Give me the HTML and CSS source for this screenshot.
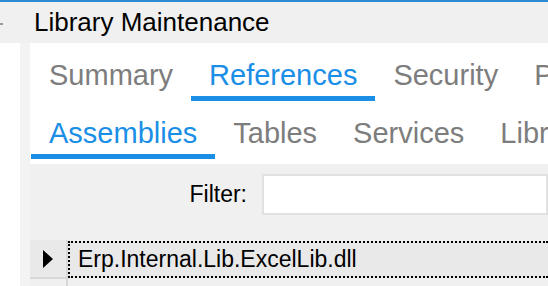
FILE: index.html
```html
<!DOCTYPE html>
<html lang="en">
<head>
  <meta charset="UTF-8" />
  <title>Library Maintenance</title>
  <link rel="stylesheet" href="styles.css">
</head>
<body>
  <div class="topline"></div>
  <div class="titlebar">
    <span class="grip"></span>
    <span class="title">Library Maintenance</span>
  </div>

  <div class="main">
    <div class="side"></div>
    <div class="strip"></div>

    <div class="panel">
      <!-- Main tabs -->
      <nav class="tabs">
        <span class="tab">Summary</span>
        <span class="tab active">References</span>
        <span class="tab">Security</span>
        <span class="tab">Printing</span>
      </nav>

      <!-- Reference sub tabs -->
      <nav class="tabs sub">
        <span class="tab active">Assemblies</span>
        <span class="tab">Tables</span>
        <span class="tab">Services</span>
        <span class="tab">Libraries</span>
      </nav>

      <div class="content">
        <div class="filter">
          <label for="filterInput">Filter:</label>
          <input id="filterInput" class="filter-input" type="text" />
        </div>

        <div class="grid">
          <div class="grid-row current">
            <div class="row-head">
              <svg class="row-arrow" viewBox="0 0 10 18">
                <polygon points="0,0 10,9 0,18" />
              </svg>
            </div>
            <div class="cell">Erp.Internal.Lib.ExcelLib.dll</div>
          </div>
          <div class="grid-row">
            <div class="row-head"></div>
            <div class="cell"></div>
          </div>
        </div>
      </div>
    </div>
  </div>
</body>
</html>
```

FILE: styles.css
```css
html, body {
  margin: 0;
  padding: 0;
  height: 100%;
  overflow: hidden;
}

body {
  background: #fff;
  font-family: "Liberation Sans", Arial, sans-serif;
  color: #000;
  display: flex;
  flex-direction: column;
}

.topline {
  flex: none;
  height: 2px;
  background: #2a8bd0;
}

.titlebar {
  flex: none;
  height: 41px;
  background: #f0f0f0;
  display: flex;
  align-items: center;
}

.grip {
  width: 3px;
  height: 2px;
  background: #9c9c9c;
  margin-top: 3px;
}

.title {
  margin-left: 31px;
  font-size: 26px;
  line-height: 29px;
}

.main {
  flex: 1;
  display: flex;
  min-height: 0;
}

.side {
  width: 20px;
  background: #fff;
}

.strip {
  width: 10px;
  background: #f3f3f3;
}

.panel {
  flex: 1;
  display: flex;
  flex-direction: column;
  min-width: 0;
  background: #fff;
}

.tabs {
  flex: none;
  display: flex;
  padding: 16px 0 0 1px;
  white-space: nowrap;
  overflow: hidden;
}

.tabs.sub {
  padding-bottom: 5px;
}

.tab {
  flex: none;
  padding: 0 18px 4px;
  font-size: 29px;
  line-height: 33px;
  color: #7d7d7d;
  border-bottom: 5px solid transparent;
}

.tab.active {
  color: #1b8ee6;
  border-bottom-color: #1b8ee6;
}

.content {
  flex: 1;
  min-height: 0;
  overflow: hidden;
  background: #f0f0f0;
}

.filter {
  display: flex;
  align-items: center;
  padding-top: 10px;
}

.filter label {
  width: 217px;
  margin-right: 15px;
  text-align: right;
  font-size: 23px;
}

.filter-input {
  flex: 1;
  min-width: 0;
  height: 41px;
  box-sizing: border-box;
  margin: 0;
  border: 2px solid #e1e1e1;
  background: #fff;
  outline: none;
}

.grid {
  margin-top: 25px;
}

.grid-row {
  display: flex;
  height: 39px;
}

.row-head {
  width: 36px;
  border-right: 2px solid #d8d8d8;
  border-bottom: 2px solid #d8d8d8;
  display: flex;
  align-items: center;
  justify-content: center;
}

.grid-row.current .row-head {
  background: #e9e9e9;
}

.row-arrow {
  width: 10px;
  height: 18px;
  fill: #000;
}

.cell {
  flex: 1;
  font-size: 23px;
  line-height: 32px;
  padding-left: 8px;
}

.grid-row.current .cell {
  margin: 1px 0;
  background: #e9e9e9;
  border: 2px dotted #000;
  border-right: none;
}
```
